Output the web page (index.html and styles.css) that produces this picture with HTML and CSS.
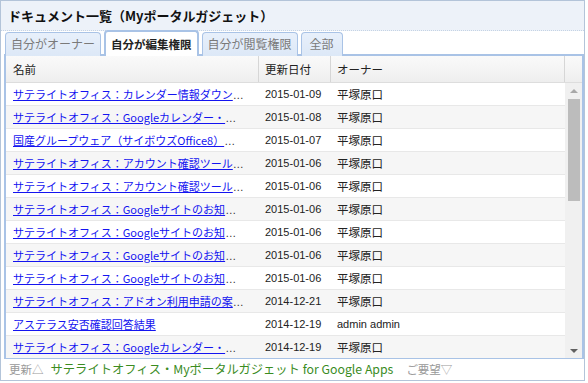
FILE: index.html
```html
<html lang="ja">
<head>
    <title>ドキュメント一覧</title>
    <meta charset="utf-8">
    <link rel="stylesheet" href="styles.css">
</head>
<body>
<div class="gadget">
    <div class="gadget-title">ドキュメント一覧（Myポータルガジェット）</div>

    <div class="tabs">
        <div class="tab">自分がオーナー</div>
        <div class="tab tab-active">自分が編集権限</div>
        <div class="tab">自分が閲覧権限</div>
        <div class="tab tab-all">全部</div>
    </div>

    <div class="panel">
        <div class="list-head">
            <div class="col col-name">名前</div>
            <div class="col col-date">更新日付</div>
            <div class="col col-owner">オーナー</div>
            <div class="col col-bar"></div>
        </div>
        <div class="list-body">
            <div class="rows">
                <div class="row">
                    <div class="col col-name"><a href="#">サテライトオフィス：カレンダー情報ダウンロードツール</a></div>
                    <div class="col col-date">2015-01-09</div>
                    <div class="col col-owner">平塚原口</div>
                </div>
                <div class="row">
                    <div class="col col-name"><a href="#">サテライトオフィス：Googleカレンダー・リソース予約</a></div>
                    <div class="col col-date">2015-01-08</div>
                    <div class="col col-owner">平塚原口</div>
                </div>
                <div class="row">
                    <div class="col col-name"><a href="#">国産グループウェア（サイボウズOffice8）連携</a></div>
                    <div class="col col-date">2015-01-07</div>
                    <div class="col col-owner">平塚原口</div>
                </div>
                <div class="row">
                    <div class="col col-name"><a href="#">サテライトオフィス：アカウント確認ツール(管理者用)</a></div>
                    <div class="col col-date">2015-01-06</div>
                    <div class="col col-owner">平塚原口</div>
                </div>
                <div class="row">
                    <div class="col col-name"><a href="#">サテライトオフィス：アカウント確認ツール(利用者用)</a></div>
                    <div class="col col-date">2015-01-06</div>
                    <div class="col col-owner">平塚原口</div>
                </div>
                <div class="row">
                    <div class="col col-name"><a href="#">サテライトオフィス：Googleサイトのお知らせ機能</a></div>
                    <div class="col col-date">2015-01-06</div>
                    <div class="col col-owner">平塚原口</div>
                </div>
                <div class="row">
                    <div class="col col-name"><a href="#">サテライトオフィス：Googleサイトのお知らせ一覧</a></div>
                    <div class="col col-date">2015-01-06</div>
                    <div class="col col-owner">平塚原口</div>
                </div>
                <div class="row">
                    <div class="col col-name"><a href="#">サテライトオフィス：Googleサイトのお知らせ設定</a></div>
                    <div class="col col-date">2015-01-06</div>
                    <div class="col col-owner">平塚原口</div>
                </div>
                <div class="row">
                    <div class="col col-name"><a href="#">サテライトオフィス：Googleサイトのお知らせ管理</a></div>
                    <div class="col col-date">2015-01-06</div>
                    <div class="col col-owner">平塚原口</div>
                </div>
                <div class="row">
                    <div class="col col-name"><a href="#">サテライトオフィス：アドオン利用申請の案内について</a></div>
                    <div class="col col-date">2014-12-21</div>
                    <div class="col col-owner">平塚原口</div>
                </div>
                <div class="row">
                    <div class="col col-name"><a href="#">アステラス安否確認回答結果</a></div>
                    <div class="col col-date">2014-12-19</div>
                    <div class="col col-owner owner-latin">admin admin</div>
                </div>
                <div class="row">
                    <div class="col col-name"><a href="#">サテライトオフィス：Googleカレンダー・リソース管理</a></div>
                    <div class="col col-date">2014-12-19</div>
                    <div class="col col-owner">平塚原口</div>
                </div>
            </div>
            <div class="scrollbar">
                <div class="arrow arrow-up"></div>
                <div class="thumb"></div>
                <div class="track"></div>
                <div class="arrow arrow-down"></div>
            </div>
        </div>
    </div>

    <div class="gadget-foot">
        <span class="foot-link">更新△</span>
        <span class="foot-brand">サテライトオフィス・Myポータルガジェット for Google Apps</span>
        <span class="foot-link">ご要望▽</span>
    </div>
</div>
</body>
</html>
```

FILE: styles.css
```css
* {
    margin: 0;
    padding: 0;
    box-sizing: border-box;
}

body {
    background: #ffffff;
    font-family: 'Liberation Sans', 'Noto Sans CJK JP', sans-serif;
    font-size: 12px;
    color: #222222;
}

.gadget {
    width: 585px;
    height: 381px;
    border: 1px solid #b3c4d9;
    display: flex;
    flex-direction: column;
    overflow: hidden;
}

.gadget-title {
    height: 30px;
    line-height: 29px;
    padding-left: 7px;
    background: #edf2f9;
    border-bottom: 1px dotted #c5d3e4;
    font-family: 'Noto Sans CJK JP', sans-serif;
    font-size: 13px;
    font-weight: bold;
    color: #111111;
}

.tabs {
    display: flex;
    align-items: flex-end;
    gap: 3px;
    height: 25px;
    padding-left: 4px;
    margin-bottom: -2px;
    position: relative;
    z-index: 1;
}

.tab {
    height: 24px;
    line-height: 22px;
    padding: 0 5px;
    border: 1px solid #a9c3e6;
    border-bottom: none;
    border-radius: 4px 4px 0 0;
    background: linear-gradient(#e8f0fb, #dce8f7);
    color: #7a7a7a;
    font-family: 'Noto Sans CJK JP', sans-serif;
    font-size: 12px;
}

.tab-active {
    height: 26px;
    line-height: 24px;
    padding: 0 5px;
    background: #ffffff;
    border: 2px solid #a9c3e6;
    border-bottom: none;
    color: #222222;
    font-weight: bold;
    font-size: 11.5px;
}

.tab-all {
    padding: 0 8px;
}

.panel {
    flex: 1;
    margin-left: 3px;
    border: 2px solid #a9c3e6;
    border-bottom-width: 1px;
    display: flex;
    flex-direction: column;
    overflow: hidden;
}

.list-head {
    display: flex;
    height: 27px;
    background: linear-gradient(#fafafa, #eeeeee);
    border-bottom: 1px solid #dddddd;
}

.list-head .col {
    line-height: 26px;
    border-right: 1px solid #d6d6d6;
    font-family: 'Noto Sans CJK JP', sans-serif;
    font-size: 11.5px;
}

.list-head .col-bar {
    border-right: none;
}

.col {
    white-space: nowrap;
    overflow: hidden;
}

.col-name {
    width: 253px;
    padding: 0 13px 0 7px;
    text-overflow: ellipsis;
}

.col-date {
    width: 72px;
    padding-left: 6px;
}

.col-owner {
    flex: 1;
    padding-left: 6px;
    font-family: 'Noto Sans CJK JP', sans-serif;
}

.col-bar {
    width: 17px;
}

.list-body {
    flex: 1;
    display: flex;
    overflow: hidden;
}

.rows {
    flex: 1;
}

.row {
    display: flex;
    height: 23px;
    line-height: 22px;
    font-size: 11px;
    border-bottom: 1px solid #e8e8e8;
}

.row:nth-child(even) {
    background: #f6f6f6;
}

.row a {
    color: #1414f0;
    text-decoration: underline;
    font-family: 'Noto Sans CJK JP', sans-serif;
}

.row .col-name {
    color: #333333;
}

.row .col-owner {
    font-size: 11.5px;
}

.row .owner-latin {
    font-family: 'Liberation Sans', sans-serif;
    font-size: 11px;
}

.scrollbar {
    width: 17px;
    background: #f0f0f0;
    display: flex;
    flex-direction: column;
    align-items: center;
}

.arrow {
    width: 0;
    height: 0;
    border-left: 4px solid transparent;
    border-right: 4px solid transparent;
}

.arrow-up {
    margin-top: 6px;
    border-bottom: 4px solid #a8a8a8;
}

.arrow-down {
    margin-bottom: 5px;
    border-top: 4px solid #606060;
}

.thumb {
    width: 12px;
    height: 102px;
    margin-top: 6px;
    background: #bcbcbc;
}

.track {
    flex: 1;
}

.gadget-foot {
    height: 21px;
    line-height: 20px;
    padding-left: 8px;
    font-family: 'Noto Sans CJK JP', sans-serif;
    display: flex;
    gap: 7px;
}

.foot-link {
    color: #999999;
    font-size: 11.5px;
}

.foot-brand {
    color: #3b8c1f;
    font-size: 12.3px;
    margin-right: 6px;
}
```
